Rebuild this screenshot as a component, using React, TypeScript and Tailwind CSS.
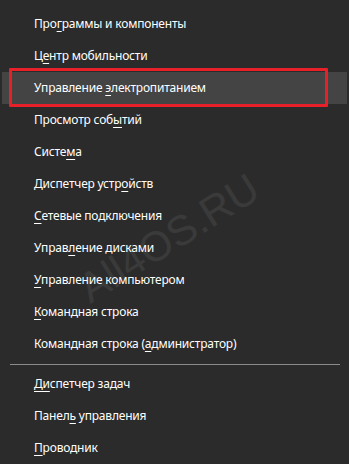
import React from 'react';

type Item = { pre: string; key: string; post: string; active?: boolean };

const top: Item[] = [
  { pre: 'Про', key: 'г', post: 'раммы и компоненты' },
  { pre: 'Ц', key: 'е', post: 'нтр мобильности' },
  { pre: 'Управление ', key: 'э', post: 'лектропитанием', active: true },
  { pre: 'Просмотр соб', key: 'ы', post: 'тий' },
  { pre: 'Систе', key: 'м', post: 'а' },
  { pre: 'Диспетчер устр', key: 'о', post: 'йств' },
  { pre: '', key: 'С', post: 'етевые подключения' },
  { pre: 'Управ', key: 'л', post: 'ение дисками' },
  { pre: '', key: 'У', post: 'правление компьютером' },
  { pre: '', key: 'К', post: 'омандная строка' },
  { pre: 'Командная строка (', key: 'а', post: 'дминистратор)' },
];

const bottom: Item[] = [
  { pre: '', key: 'Ди', post: 'спетчер задач' },
  { pre: 'Панел', key: 'ь', post: ' управления' },
  { pre: '', key: 'П', post: 'роводник' },
];

function Row({ item }: { item: Item }) {
  return (
    <div className={`h-8 flex items-center pl-8 mx-[2px] ${item.active ? 'bg-[#444444]' : ''}`}>
      <span className="text-[12px] tracking-[-0.2px] text-white whitespace-pre">
        {item.pre}
        <span className="underline underline-offset-[3px] decoration-1">{item.key}</span>
        {item.post}
      </span>
    </div>
  );
}

export default function App() {
  return (
    <div
      className="relative w-[349px] h-[464px] bg-[#2b2b2b] overflow-hidden pt-2"
      style={{ fontFamily: '"Noto Sans", "Open Sans", sans-serif' }}
    >
      {/* watermark */}
      <div
        className="absolute left-[94px] top-[268px] h-[42px] leading-none text-[42px] text-white/[0.07] -rotate-[32deg] origin-bottom-left whitespace-nowrap pointer-events-none"
        style={{ fontFamily: '"Liberation Sans", sans-serif' }}
      >
        All4OS.RU
      </div>

      <div className="relative flex flex-col">
        {top.map((it, i) => (
          <Row key={i} item={it} />
        ))}
      </div>
      <div className="h-2 flex items-center pl-[10px] pr-[9px]">
        <div className="h-[1px] w-full bg-[#8c8c8c]" />
      </div>
      <div className="relative flex flex-col">
        {bottom.map((it, i) => (
          <Row key={i} item={it} />
        ))}
      </div>

      {/* red annotation frame */}
      <div className="absolute left-[9px] top-[68px] w-[319px] h-[39px] border-[3px] border-[#e8202a] rounded-[1px] pointer-events-none" />
    </div>
  );
}
